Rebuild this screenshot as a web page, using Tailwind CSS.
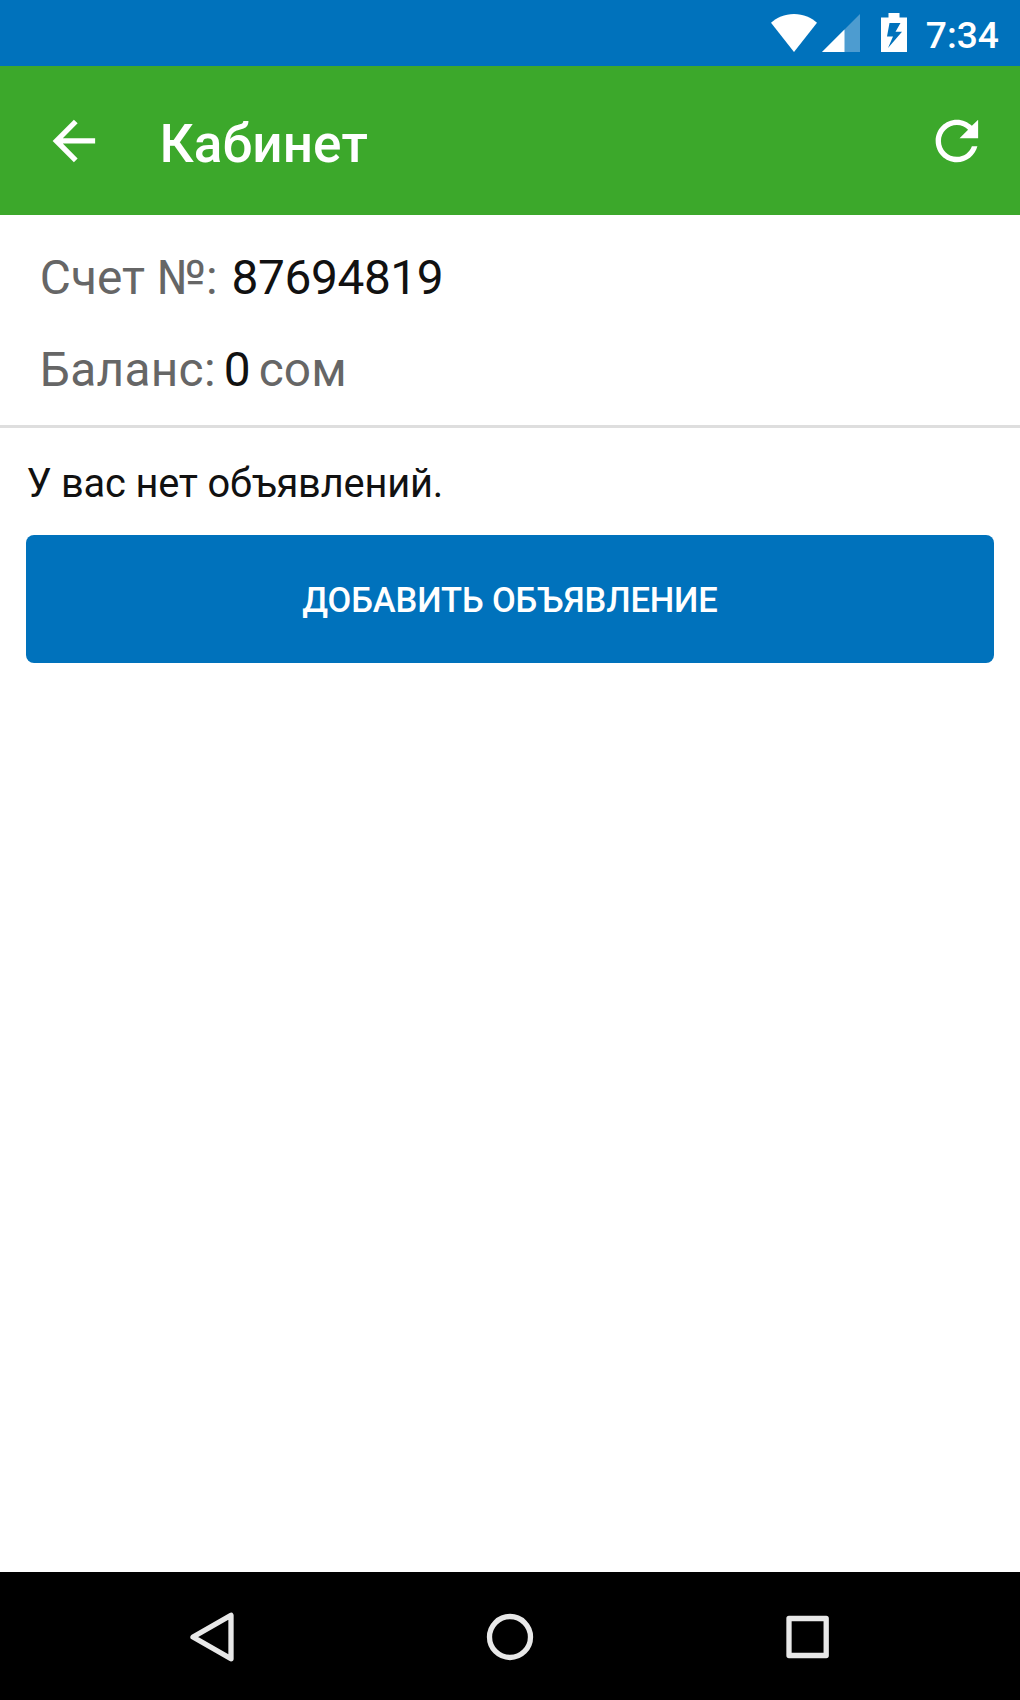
<!DOCTYPE html>
<html lang="ru">
<head>
<meta charset="utf-8">
<title>Кабинет</title>
<script src="https://cdn.jsdelivr.net/npm/@tailwindcss/browser@4"></script>
</head>
<body class="w-[1020px] h-[1700px] overflow-hidden flex flex-col bg-white font-[Roboto,sans-serif] text-[#111]">
  <!-- Status bar -->
  <div class="h-[66.4px] shrink-0 bg-[#0072bc] flex justify-end items-start pr-[21px] text-white">
    <svg class="w-[46px] h-[38px] mt-[14px]" viewBox="0 0 46 38" fill="#fff"><path d="M23 38 0 8.8C5.500 3.500 13.500 0 23 0S40.500 3.500 46 8.800Z"/></svg>
    <svg class="w-[38px] h-[38px] mt-[14.400px] ml-[5px]" viewBox="0 0 38 38" fill="#fff"><path fill-opacity=".3" d="M0 38H38V0Z"/><path d="M0 38H22.500V15.500Z"/></svg>
    <svg class="w-[26px] h-[39px] mt-[13.300px] ml-[21px]" viewBox="0 0 26 39" fill="#fff"><path fill-rule="evenodd" d="M7.500 0H18.500V4.500H26V39H0V4.500H7.500ZM8.500 10 6 23.500H12L7 35 21 18.800H14.500L19.500 10Z"/></svg>
    <span class="ml-[18.500px] mt-[5px] leading-[60px] text-[37.2px] font-medium">7:34</span>
  </div>
  <!-- App bar -->
  <header class="h-[148.700px] shrink-0 bg-[#3ca82b] flex items-center pl-[42px] pr-[31.500px] text-white">
    <svg class="w-[63.750px] h-[63.750px]" viewBox="0 0 24 24" fill="#fff"><path d="M20 11H7.830l5.590-5.590L12 4l-8 8 8 8 1.410-1.410L7.830 13H20v-2z"/></svg>
    <h1 class="ml-[53.700px] pt-[7px] leading-[60px] text-[53.1px] font-medium tracking-[0.15px]">Кабинет</h1>
    <svg class="ml-auto w-[63.750px] h-[63.750px]" viewBox="0 0 24 24" fill="#fff"><path d="M17.650 6.350C16.200 4.900 14.210 4 12 4c-4.420 0-7.990 3.580-7.990 8s3.570 8 7.990 8c3.730 0 6.840-2.550 7.730-6h-2.080c-.82 2.330-3.040 4-5.650 4-3.310 0-6-2.690-6-6s2.690-6 6-6c1.660 0 3.140.69 4.220 1.780L13 11h7V4l-2.350 2.350z"/></svg>
  </header>
  <!-- Account summary -->
  <section class="h-[212.900px] shrink-0 pt-[17px] pl-[39.800px] border-b-[3px] border-[#dedede] text-[47.8px] text-[#666]">
    <p class="h-[91.500px] leading-[92px] flex"><span>Счет №:</span><span class="ml-[14px] text-[#111] tracking-[-0.4px]">87694819</span></p>
    <p class="h-[91.500px] leading-[92px] flex"><span class="tracking-[0.3px]">Баланс:</span><span class="ml-[8px] text-[#111]">0</span><span class="ml-[8px] tracking-[0.1px]">сом</span></p>
  </section>
  <!-- Listings -->
  <main class="flex-1 px-[26.400px] pt-[29px]">
    <p class="h-[54px] leading-[54px] text-[39.8px] tracking-[-0.17px]">У вас нет объявлений.</p>
    <button class="mt-[24.200px] w-full h-[127.500px] rounded-[8px] bg-[#0072bc] flex items-center justify-center pt-[4px] text-[34.5px] font-medium tracking-[-0.13px] text-white">ДОБАВИТЬ ОБЪЯВЛЕНИЕ</button>
  </main>
  <!-- Navigation bar -->
  <nav class="h-[127.700px] shrink-0 bg-black flex items-center justify-between px-[188px] pt-[1px]">
    <svg class="w-[48px] h-[52px]" viewBox="0 0 48 52" fill="none" stroke="#e8e8e8" stroke-width="5.300" stroke-linejoin="round"><path d="M5 26 43 4.200V47.800Z"/></svg>
    <svg class="w-[48px] h-[48px]" viewBox="0 0 48 48" fill="none" stroke="#e8e8e8" stroke-width="5.300"><circle cx="24" cy="24" r="20.500"/></svg>
    <svg class="w-[48px] h-[48px]" viewBox="0 0 48 48" fill="none" stroke="#e8e8e8" stroke-width="5.300" stroke-linejoin="round"><path d="M5 5.500H42.200V42.500H5Z"/></svg>
  </nav>
</body>
</html>
